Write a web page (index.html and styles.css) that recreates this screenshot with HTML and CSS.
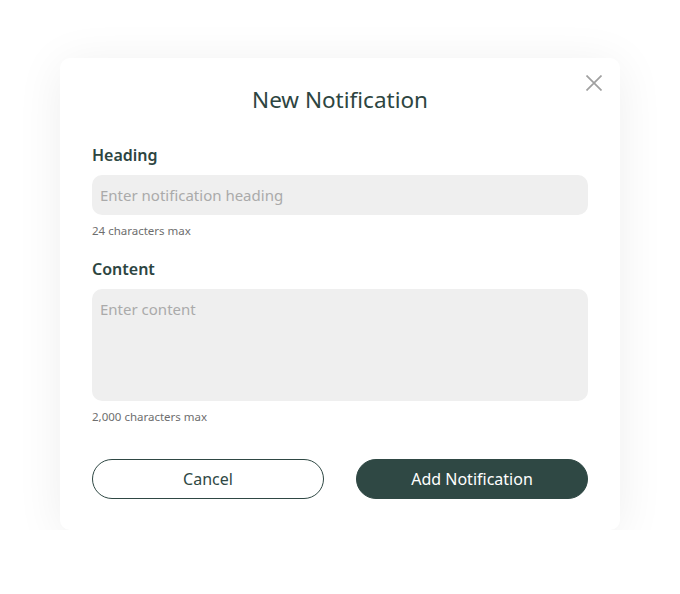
FILE: index.html
```html
<!DOCTYPE html>
<html lang="en">
<head>
<meta charset="utf-8">
<title>New Notification</title>
<link rel="stylesheet" href="styles.css">
</head>
<body>
<div class="modal">
  <button class="close" aria-label="Close">
    <svg width="16" height="16" viewBox="0 0 16 16"><path d="M0.5 0.5L15.5 15.5M15.5 0.5L0.5 15.5" stroke="#a0a0a0" stroke-width="1.7" fill="none"/></svg>
  </button>
  <h1 class="title">New Notification</h1>
  <div class="field">
    <label class="label">Heading</label>
    <div class="input">Enter notification heading</div>
    <div class="hint">24 characters max</div>
  </div>
  <div class="field">
    <label class="label">Content</label>
    <div class="input textarea">Enter content</div>
    <div class="hint">2,000 characters max</div>
  </div>
  <div class="actions">
    <button class="btn btn-outline">Cancel</button>
    <button class="btn btn-solid">Add Notification</button>
  </div>
</div>
</body>
</html>
```
FILE: styles.css
```css
* { box-sizing: border-box; }
html, body { margin: 0; padding: 0; background: #ffffff; }
body {
  font-family: "Noto Sans", "Open Sans", sans-serif;
  color: #2f4844;
  padding: 58px 60px 0 60px;
}
.modal {
  position: relative;
  width: 560px;
  background: #fff;
  border-radius: 10px;
  box-shadow: 0 6px 48px rgba(0, 0, 0, 0.07);
  padding: 26px 32px 31px 32px;
}
.close {
  position: absolute;
  top: 12px;
  right: 13px;
  width: 26px;
  height: 26px;
  padding: 0;
  border: 0;
  background: none;
  display: flex;
  align-items: center;
  justify-content: center;
}
.title {
  margin: 0;
  text-align: center;
  font-size: 22.5px;
  font-weight: 400;
  line-height: 32px;
  color: #2d4541;
}
.field { margin-top: 27px; }
.field + .field { margin-top: 18px; }
.label {
  display: block;
  font-size: 16px;
  font-weight: 600;
  line-height: 24px;
  color: #2d4541;
}
.input {
  margin-top: 8px;
  height: 40px;
  border-radius: 10px;
  background: #efefef;
  padding: 8px 8px;
  font-size: 15px;
  line-height: 24px;
  color: #aaaaaa;
}
.textarea { height: 112px; }
.hint {
  margin-top: 8px;
  font-size: 11.5px;
  line-height: 16px;
  color: #6e6e6e;
}
.actions {
  margin-top: 34px;
  display: grid;
  grid-template-columns: 1fr 1fr;
  gap: 32px;
}
.btn {
  height: 40px;
  border-radius: 20px;
  font-family: inherit;
  font-size: 16px;
  line-height: 24px;
}
.btn-outline {
  background: #fff;
  border: 1px solid #2f4844;
  color: #2f4844;
}
.btn-solid {
  background: #2f4844;
  border: 1px solid #2f4844;
  color: #fff;
}
```
